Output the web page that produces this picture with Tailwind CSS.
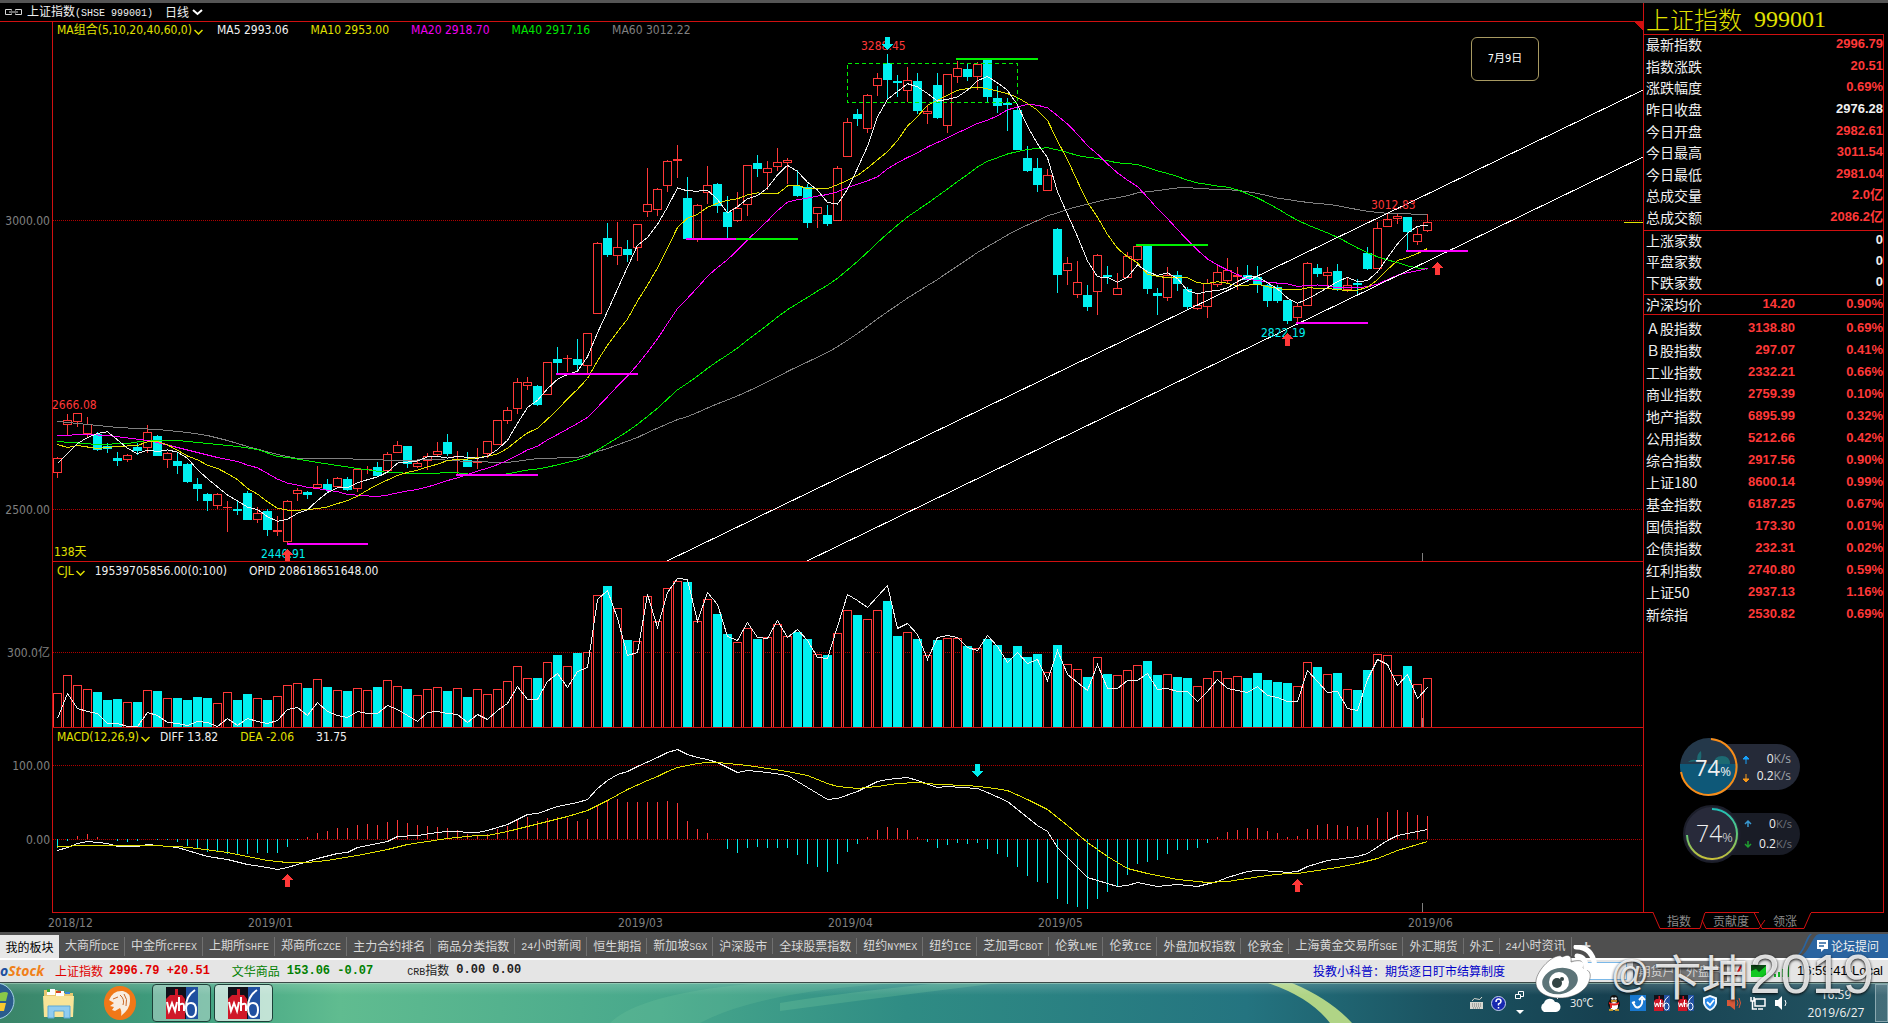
<!DOCTYPE html>
<html lang="zh-CN" class="h-full">
<head>
  <meta charset="UTF-8">
  <meta name="viewport" content="width=device-width, initial-scale=1.0">
  <title>上证指数 999001</title>
  <script src="https://cdn.jsdelivr.net/npm/@tailwindcss/browser@4"></script>
</head>
<body class="relative flex h-screen flex-col overflow-hidden bg-black font-['DejaVu_Sans_Condensed','Noto_Sans_CJK_SC',sans-serif] text-xs text-[#f0f0f0]">

<div class="h-[3px] shrink-0 bg-[#555]"></div>

<main class="flex min-h-0 flex-1">

  <!-- Chart column -->
  <div class="flex min-w-0 flex-1 flex-col">
    <div class="flex h-[18px] shrink-0 items-center pl-[5px] font-['Noto_Sans_CJK_SC',sans-serif]">
      <svg class="h-[6px] w-[17px]" viewBox="0 0 17 6" fill="none" stroke="#d8d8d8"><path d="M6.500 1.500V.5h-6v5h6V4.500M10.500 1.500V.5h6v5h-6V4.500M4 3h9"/></svg>
      <h1 class="ml-[5px] whitespace-pre">上证指数<span class="font-['Liberation_Mono',monospace] text-[10px]">(SHSE 999001)</span></h1>
      <button class="ml-3 flex items-center gap-[3px]">日线<svg class="h-[7px] w-[11px]" viewBox="0 0 11 7" fill="none" stroke="#fff" stroke-width="2"><path d="M1 1l4.500 4L10 1"/></svg></button>
    </div>

    <section class="relative min-h-0 flex-[540_1_0%]">
      <svg id="price" class="absolute inset-0 size-full" viewBox="0 21 1643 540" preserveAspectRatio="none" shape-rendering="crispEdges"></svg>
      <div class="relative flex items-center gap-[22px] pl-[57px] leading-[18px]">
        <div class="flex items-center gap-[14px]">
          <button class="flex items-center gap-0.5 text-[#e0e000]">MA组合(5,10,20,40,60,0)<svg class="mt-1 h-[6px] w-[9px]" viewBox="0 0 9 6" fill="none" stroke="#e0e000" stroke-width="1.500"><path d="M.5 1l4 4 4-4"/></svg></button>
          <span>MA5 2993.06</span>
        </div>
        <span class="text-[#e0e000]">MA10 2953.00</span>
        <span class="text-[#f000f0]">MA20 2918.70</span>
        <span class="text-[#00e800]">MA40 2917.16</span>
        <span class="text-[#808080]">MA60 3012.22</span>
      </div>
      <div class="absolute top-4 right-[104px] flex h-11 w-[68px] items-center justify-center rounded-md border border-[#a89a62] text-[11px] text-white">7月9日</div>
    </section>

    <section class="relative min-h-0 flex-[166_1_0%]">
      <svg id="volume" class="absolute inset-0 size-full" viewBox="0 561 1643 166" preserveAspectRatio="none" shape-rendering="crispEdges"></svg>
      <div class="relative flex items-center gap-[22px] pt-px pl-[57px] leading-[18px]">
        <div class="flex items-center gap-[10px]">
          <button class="flex items-center gap-0.5 text-[#e0e000]">CJL<svg class="mt-1 h-[6px] w-[9px]" viewBox="0 0 9 6" fill="none" stroke="#e0e000" stroke-width="1.500"><path d="M.5 1l4 4 4-4"/></svg></button>
          <span>19539705856.00(0:100)</span>
        </div>
        <span>OPID 208618651648.00</span>
      </div>
    </section>

    <section class="relative min-h-0 flex-[185_1_0%]">
      <svg id="macd" class="absolute inset-0 size-full" viewBox="0 727 1643 185" preserveAspectRatio="none" shape-rendering="crispEdges"></svg>
      <div class="relative flex items-center gap-[22px] pt-px pl-[57px] leading-[18px]">
        <div class="flex items-center gap-[10px]">
          <button class="flex items-center gap-0.5 text-[#e0e000]">MACD(12,26,9)<svg class="mt-1 h-[6px] w-[9px]" viewBox="0 0 9 6" fill="none" stroke="#e0e000" stroke-width="1.500"><path d="M.5 1l4 4 4-4"/></svg></button>
          <span>DIFF 13.82</span>
        </div>
        <span class="text-[#e0e000]">DEA -2.06</span>
        <span>31.75</span>
      </div>
    </section>

    <svg id="axis" class="h-5 w-full shrink-0" viewBox="0 912 1643 20" preserveAspectRatio="none" shape-rendering="crispEdges"></svg>
  </div>

  <!-- Quote panel -->
  <aside class="flex w-[245px] shrink-0 flex-col font-['Noto_Sans_CJK_SC',sans-serif]">
    <div class="mr-1 flex min-h-0 flex-1 flex-col border-l border-[#d01010]">
      <h2 class="flex h-[31px] shrink-0 items-center gap-3 pl-[2px] text-2xl leading-none font-light text-[#e0e000]">上证指数 <span class="font-['Liberation_Serif',serif]">999001</span></h2>
      <div class="min-h-0 flex-1 border-t border-r border-b border-[#d01010] text-sm">
        <table class="h-[196px] w-full border-b border-[#d01010]"><tbody id="summary"></tbody></table>
        <table class="h-16 w-full border-b border-[#d01010]"><tbody id="breadth"></tbody></table>
        <table class="h-5 w-full table-fixed border-b border-[#d01010]"><tbody id="average"></tbody></table>
        <table class="mt-1 h-[308px] w-full table-fixed"><tbody id="indices"></tbody></table>
      </div>
    </div>
    <nav class="relative h-[19px] shrink-0 text-xs text-[#8a8a8a]">
      <svg class="absolute -top-px left-0 h-[18px] w-[245px]" viewBox="0 0 245 18" fill="none" stroke="#d01010">
        <path d="M10 .5L17 16.500H57L62 .5M59 8l4 8.500H116M111 .5l8 16H161L168 .5M122 8l-6 8.500"/>
        <path d="M10.500 .5H62M116 .5H168" stroke="#000"/>
        <path d="M62 .5h54"/>
      </svg>
      <div class="relative flex pl-6 leading-4">
        <button class="w-6">指数</button>
        <button class="ml-[22px] w-9">贡献度</button>
        <button class="ml-6 w-6">领涨</button>
      </div>
    </nav>
  </aside>
</main>

<!-- Board tabs -->
<nav class="flex h-[26px] shrink-0 items-center bg-[#4f4f4f] font-['Noto_Sans_CJK_SC',sans-serif] leading-4 text-[#d8d8d8]">
  <button class="mt-[3px] h-[23px] w-[59px] shrink-0 bg-[#e8e8e8] text-black">我的板块</button>
  <div id="boards" class="flex min-w-0 items-center overflow-hidden pt-0.5"></div>
  <button class="ml-[10px] text-base font-bold" aria-label="添加">+</button>
  <a href="#" class="relative mt-0.5 ml-auto flex h-6 w-[93px] shrink-0 items-center justify-end gap-[3px] pr-[9px] text-[#f0f0f0]">
    <svg class="absolute inset-0 size-full" viewBox="0 0 93 24"><path d="M93 0H24C17 1 15 19 3 24H93z" fill="#2a64a0"/><path d="M15 0C10 4 9 18 0 23c10-2 12-19 17-23" fill="#2a64a0"/></svg>
    <svg class="relative h-3 w-[11px]" viewBox="0 0 11 12"><path d="M0 0h11v9H7l-3 3V9H0z" fill="#fff"/><path d="M2 3h7M2 6h5" stroke="#2a64a0" stroke-width="1.500"/></svg>
    <span class="relative">论坛提问</span>
  </a>
</nav>

<!-- Ticker -->
<div class="flex h-[25px] shrink-0 items-center border-t-2 border-b border-t-white border-b-[#3c4a48] bg-[#e5e5e5] font-['Noto_Sans_CJK_SC',sans-serif] leading-4 text-[#222]">
  <div class="w-[55px] shrink-0 overflow-hidden font-['Open_Sans',sans-serif] text-sm font-bold text-[#f08018] italic"><span class="text-[#2050a0]">o</span>Stock</div>
  <div class="flex gap-[6px] text-[#e00000]">上证指数<span class="font-['Liberation_Mono',monospace] font-bold whitespace-pre">2996.79 +20.51</span></div>
  <div class="ml-[22px] flex gap-[7px] text-[#008000]">文华商品<span class="font-['Liberation_Mono',monospace] font-bold whitespace-pre">153.06 -0.07</span></div>
  <div class="ml-[34px] flex gap-[7px]"><span><span class="font-['Liberation_Mono',monospace] text-[10px]">CRB</span>指数</span><span class="font-['Liberation_Mono',monospace] font-bold whitespace-pre">0.00 0.00</span></div>
  <a href="#" class="ml-auto text-[#0000c8]">投教小科普：期货逐日盯市结算制度</a>
  <input type="text" aria-label="搜索" class="ml-[67px] h-[18px] w-[55px] border border-[#7ab8e8] bg-white">
  <div class="ml-1.5 flex h-5 w-[94px] bg-[#747474] text-[#d8d8d8]">
    <button class="w-12 border-r border-[#aaa]">期货户</button>
    <button class="w-[46px]">外盘户</button>
  </div>
  <svg class="ml-1 h-4 w-[60px]" viewBox="0 0 60 16">
    <path d="M5 13L10 3" stroke="#e01010" stroke-width="2"/>
    <path d="M20 2h15v12H20z" fill="#0c4a14"/><path d="M20 14V8l5-2 3 3 7-6v11z" fill="#10c820"/>
    <path d="M43 14v-3h2v3zM47 14V9h2v5zM51 14V6h2v8zM56 14V2h2v12z" fill="#18b028"/>
  </svg>
  <span class="mr-[10px] ml-1.5 w-[81px] text-right font-['Liberation_Sans',sans-serif] text-[13px] whitespace-nowrap text-black">16:59:41-Local</span>
</div>

<!-- Taskbar -->
<footer class="relative flex h-10 shrink-0 items-center overflow-hidden bg-linear-to-r from-[#2f7f6b] via-[#2f8c86] to-[#1c4454] font-['Open_Sans','Noto_Sans_CJK_SC',sans-serif]">
  <svg class="absolute inset-0 size-full" viewBox="0 0 1888 40" preserveAspectRatio="none">
    <defs>
      <linearGradient id="wall" x1="0" x2="1"><stop offset="0" stop-color="#3a8468"/><stop offset=".1" stop-color="#3fa080"/><stop offset=".18" stop-color="#60bc90"/><stop offset=".35" stop-color="#48a88c"/><stop offset=".48" stop-color="#2f8c84"/><stop offset=".66" stop-color="#247480"/><stop offset=".76" stop-color="#1b5462"/><stop offset=".85" stop-color="#164050"/><stop offset="1" stop-color="#235462"/></linearGradient>
      <linearGradient id="gloss" x1="0" x2="0" y1="0" y2="1"><stop offset="0" stop-color="#fff" stop-opacity=".18"/><stop offset="1" stop-color="#fff" stop-opacity="0"/></linearGradient>
    </defs>
    <path d="M0 0H1888V40H0z" fill="url(#wall)"/>
    <path d="M610 40Q640 10 760 0H900Q760 8 700 40z" fill="#8fe0a8" opacity=".15"/>
    <path d="M780 28Q900 12 1000 0H940Q840 10 780 20z" fill="#8fe0a8" opacity=".2"/>
    <path d="M1268 0H1292Q1330 16 1352 40H1330Q1310 14 1268 0z" fill="#c0e088" opacity=".9"/>
    <path d="M0 0H1888V12H0z" fill="url(#gloss)"/>
    <path d="M0 .5H1888" stroke="#b8dcc8" opacity=".5"/>
  </svg>
  <div class="relative flex w-full items-center">
    <button class="w-[42px]" aria-label="开始"><svg class="h-10 w-5" viewBox="0 0 20 40"><circle cx="-4" cy="18" r="18" fill="#2a5c8c" stroke="#a8d4e8"/><path d="M0 10q6-2 8 0l-2 8H0z" fill="#8ac848"/><path d="M0 20h6l-2 8H0z" fill="#f8c830"/></svg></button>
    <button class="w-[61px]" aria-label="资源管理器"><svg class="h-[34px] w-[34px]" viewBox="0 0 34 34"><path d="M2 4h13l3 3h13v24H2z" fill="#e8c870"/><path d="M5 3h8v6H5zM14 5h8v5h-8z" fill="#fff"/><path d="M5 3h3v3H5z" fill="#40a840"/><path d="M14 5h5v2h-5z" fill="#d84020"/><path d="M23 6h5v2h-5z" fill="#3888d8"/><path d="M1 10h31l-1 21H2z" fill="#f8e498"/><path d="M6 20h22v12h-6v-7H12v7H6z" fill="#90ccf0" stroke="#5aa8d8"/></svg></button>
    <button class="w-[49px]" aria-label="浏览器"><svg class="h-9 w-[34px]" viewBox="0 0 34 36"><ellipse cx="17" cy="18" rx="16" ry="17" fill="#f07818"/><path d="M6 15Q10 5 20 6Q28 8 27 16Q27 24 18 31q1-5-1-8l-5 3-3-1 2-3-4-1 4-3z" fill="#f8ece0"/><path d="M10 14l5-2M21 9q4 5 2 12M17 10q5 4 3 10" fill="none" stroke="#c86828"/></svg></button>
    <button class="flex h-[38px] w-[59px] items-center justify-center rounded-sm border border-[#1c4038] bg-white/35" aria-label="wh6"><svg class="size-8" viewBox="0 0 32 32"><use href="#wh6"/></svg></button>
    <button class="ml-[3px] flex h-[38px] w-[59px] items-center justify-center rounded-sm border border-[#1c4038] bg-white/65" aria-label="wh6"><svg class="size-8" viewBox="0 0 32 32"><use href="#wh6"/></svg></button>

    <div class="ml-auto flex items-center">
      <svg class="h-[14px] w-[15px]" viewBox="0 0 15 14"><path d="M1 6h13v7H1z" fill="#d8d8d0"/><path d="M3 8h9M3 10h9M4 12h7" stroke="#777" stroke-dasharray="1 1"/><path d="M3 5q2-4 5-2t5-2" fill="none" stroke="#d8d8d0"/></svg>
      <svg class="ml-[7px] size-[15px]" viewBox="0 0 15 15"><circle cx="7.500" cy="7.500" r="7" fill="#1828b0" stroke="#c8d0f0"/><path d="M5 6q0-3 2.500-3T10 5.500Q10 7 7.500 8v1.500M7.500 11v1.500" fill="none" stroke="#fff" stroke-width="1.500"/></svg>
      <svg class="ml-[9px] h-[26px] w-[10px]" viewBox="0 0 10 26" fill="none" stroke="#fff"><path d="M3.500 4V1.500h5v5H6M.5 4.500h5v4h-5z"/><path d="M1 20h8l-4 4z" fill="#fff" stroke="none"/></svg>
      <svg class="ml-[14px] h-5 w-[24px]" viewBox="0 0 24 20"><path d="M5 19a5 5 0 010-9 6 6 0 0111-1 5 5 0 011 10z" fill="#fff"/><path d="M17 4l2 2M20 2v3" stroke="#fff"/></svg>
      <span class="mr-[10px] ml-[7px] w-[26px] text-[11px] whitespace-nowrap">30℃</span>
      <div class="flex items-center gap-2">
        <svg class="size-4" viewBox="0 0 16 16"><ellipse cx="8" cy="9" rx="6" ry="6" fill="#111"/><circle cx="8" cy="4" r="4" fill="#111"/><ellipse cx="8" cy="11" rx="4" ry="4" fill="#fff"/><path d="M3 7q5 3 10 0v2q-5 3-10 0z" fill="#e02020"/><path d="M4 9h2v4H4z" fill="#e02020"/><circle cx="6.500" cy="3.500" r="1.300" fill="#fff"/><circle cx="9.500" cy="3.500" r="1.300" fill="#fff"/><path d="M5 6h6M3 15h4M9 15h4" stroke="#f8b020" stroke-width="1.500"/></svg>
        <svg class="size-4" viewBox="0 0 16 16"><path d="M0 0h16v16H0z" fill="#1878d0"/><path d="M3 7q2 7 6 5t3-8M9 5l3-3 3 3M2 8l3-1" fill="none" stroke="#fff" stroke-width="2"/></svg>
        <svg class="size-4" viewBox="0 0 32 32"><use href="#wh6"/></svg>
        <svg class="size-4" viewBox="0 0 32 32"><use href="#wh6"/></svg>
        <svg class="size-4" viewBox="0 0 16 16"><path d="M8 0l7 2.500V8q-1 5-7 8-6-3-7-8V2.500z" fill="#f0f8ff"/><path d="M8 2l5 2v4q-1 4-5 6-4-2-5-6V4z" fill="#2888e8"/><path d="M5 7l3 3 4-5" fill="none" stroke="#fff" stroke-width="1.800"/></svg>
        <svg class="size-4" viewBox="0 0 16 16"><path d="M1 5h3l5-4v14l-5-4H1z" fill="#d85838"/><path d="M11 5q2 3 0 6M13 3q3 5 0 10" fill="none" stroke="#d85838"/></svg>
        <svg class="size-4" viewBox="0 0 16 16" fill="none" stroke="#fff" stroke-width="1.500"><path d="M5 4h10v7H5zM8 14h5M1 2v4h3V2M2.500 6v8H7"/></svg>
        <svg class="size-4" viewBox="0 0 16 16"><path d="M1 5h3l4-4v14l-4-4H1z" fill="#fff"/><path d="M11 5q2 3 0 6" fill="none" stroke="#fff"/></svg>
      </div>
      <div class="mr-1 ml-[11px] w-[70px] pt-px text-center leading-[18px]">16:59<br>2019/6/27</div>
      <button class="h-[38px] w-[13px] border border-[#8aa8b0] bg-white/15" aria-label="显示桌面"></button>
    </div>
  </div>
</footer>

<!-- Network speed widgets -->
<div class="absolute right-[88px] bottom-[160px] flex w-[120px] flex-col gap-2">
  <div class="relative flex h-[60px] items-center justify-end">
    <div class="flex h-[46px] w-[86px] flex-col justify-center rounded-r-full bg-[#252a38] pr-[9px] text-right font-['Open_Sans',sans-serif] text-xs leading-[17px]">
      <div>0<span class="text-[#a0a4ac]">K/s</span></div>
      <div>0.2<span class="text-[#a0a4ac]">K/s</span></div>
    </div>
    <svg class="absolute top-0 left-0 h-[60px] w-[76px]" viewBox="0 0 76 60">
      <circle cx="29" cy="30" r="29" fill="#24384a"/>
      <path d="M0 27h58a29 29 0 01-58 3z" fill="#0e5878"/>
      <path d="M8 25q5-4 9-1 0-8 4-10 1 7-1 10M34 27q0-8 8-8t8 8" fill="#1c6a72"/>
      <path d="M31 2a28 28 0 11-30 33" fill="none" stroke="#f88c18" stroke-width="2"/>
      <path d="M66 27v-7M63 22l3-3 3 3z" fill="#18a0f8" stroke="#18a0f8"/>
      <path d="M66 37v7M63 42l3 3 3-3z" fill="#f89818" stroke="#f89818"/>
    </svg>
    <div class="absolute top-4 left-[15px] font-['Open_Sans',sans-serif] text-[22px] leading-7">74<span class="text-[13px]">%</span></div>
  </div>
  <div class="relative flex h-[58px] items-center justify-end">
    <div class="flex h-[42px] w-[86px] flex-col justify-center rounded-r-full bg-[#191c26] pr-2 text-right font-['Open_Sans',sans-serif] text-xs leading-5">
      <div>0<span class="text-[11px] text-[#70747c]">K/s</span></div>
      <div>0.2<span class="text-[11px] text-[#70747c]">K/s</span></div>
    </div>
    <svg class="absolute top-0 left-[3px] h-[58px] w-[76px]" viewBox="0 0 76 58">
      <defs><linearGradient id="ring" x1="0" x2="0" y1="0" y2="1"><stop offset="0" stop-color="#20c0b8"/><stop offset=".5" stop-color="#60c878"/><stop offset="1" stop-color="#c8c038"/></linearGradient></defs>
      <circle cx="29" cy="29" r="28" fill="#282a3a" stroke="#1c1e2a" stroke-width="2"/>
      <path d="M29 4a25 25 0 11-25 26" fill="none" stroke="url(#ring)" stroke-width="2"/>
      <path d="M65 22v-5M62 19l3-3 3 3" fill="none" stroke="#3898d0" stroke-width="1.500"/>
      <path d="M65 36v5M62 39l3 3 3-3" fill="none" stroke="#20a030" stroke-width="1.500"/>
    </svg>
    <div class="absolute top-[14px] left-4 font-['Open_Sans',sans-serif] text-[23px] leading-7 font-light">74<span class="text-[13px]">%</span></div>
  </div>
</div>

<!-- Watermark -->
<div class="pointer-events-none absolute right-[14px] bottom-[20px] flex h-[58px] items-center text-white/85 [text-shadow:0_1px_3px_#000]">
  <svg class="mr-[6px] h-[54px] w-[70px] self-start" viewBox="0 0 70 54">
    <path d="M27 12c6-3 10-2 9 5 9-3 15-1 12 6 6 2 8 5 7 10-2 12-15 20-30 20C10 53 0 46 1 36 2 25 18 9 26 11z" fill="#fff" stroke="#444" stroke-opacity=".5"/>
    <ellipse cx="25" cy="36" rx="18" ry="13" fill="#5c7478" transform="rotate(-12 25 36)"/>
    <circle cx="24" cy="37" r="10" fill="#fff"/><circle cx="22" cy="38" r="5" fill="#344"/><circle cx="27" cy="34" r="2" fill="#344"/>
    <path d="M41 2q18 0 19 22M42 11q9 1 9 12" fill="none" stroke="#fff" stroke-width="5" stroke-linecap="round"/>
  </svg>
  <span class="mr-1 font-['Liberation_Sans',sans-serif] text-[38px]">@</span>
  <span class="font-['Noto_Sans_CJK_SC',sans-serif] text-5xl">卞坤</span>
  <span class="font-['Liberation_Sans',sans-serif] text-[56px]">2019</span>
</div>

<svg class="hidden">
  <symbol id="wh6" viewBox="0 0 32 32">
    <path d="M0 0h32v32H0z" fill="#101018"/><path d="M20 0h12v32H20z" fill="#2050a0"/><path d="M0 12l4-4h5V2h3v6h4l3 4v20H0z" fill="#d01828"/>
    <path d="M1 15l2 9 3-8 3 8 2-9M13 10v14M13 18q5-3 5 1v5" fill="none" stroke="#fff" stroke-width="2"/>
    <path d="M29 3q-9 6-9 17 0 10 5 10t5-7-5-7-5 6" fill="none" stroke="#fff" stroke-width="2"/>
  </symbol>
</svg>

<script>
  const RED = '#ff3838', CYAN = '#00f0f0', LINE = '#d01010', GRAY = '#808080';
  const YELLOW = '#e0e000', MAGENTA = '#ff00ff', GREEN = '#00f000';
  const FIRST = 57, STEP = 10;

  // [rising, body top, body bottom, high, low]
  const bars = [
    [1,458,473,457,478],[1,420,425,414,435],[1,413,422,413,427],[1,424,434,417,437],[0,434,450,432,451],[0,446,449,443,453],
    [0,458,461,452,466],[1,455,460,454,462],[0,447,451,443,455],[1,432,448,425,453],[0,436,456,435,456],[1,453,460,452,468],
    [0,461,466,452,474],[0,464,482,463,483],[0,484,489,478,501],[0,494,501,493,511],[1,494,506,493,509],[1,507,507,501,532],
    [0,509,511,501,515],[0,493,520,491,520],[1,513,520,507,523],[0,511,530,509,536],[1,530,532,516,536],[1,501,542,500,543],
    [1,490,494,488,501],[0,492,495,491,499],[1,484,488,466,488],[0,484,490,479,492],[1,478,487,477,487],[0,479,490,477,491],
    [1,469,489,468,492],[1,469,470,466,474],[0,467,476,462,476],[1,454,471,452,472],[1,445,453,441,453],[0,446,464,446,468],
    [1,463,467,459,468],[1,456,461,453,470],[1,451,455,442,456],[0,442,454,434,456],[1,456,457,451,474],[0,460,467,452,467],
    [1,461,463,448,469],[1,441,454,441,458],[1,420,445,420,445],[1,410,421,407,424],[1,382,409,378,414],[1,382,386,377,390],
    [0,386,405,385,406],[1,362,395,362,395],[0,359,363,347,374],[1,358,359,355,372],[0,359,365,339,372],[1,333,366,333,373],
    [1,243,314,242,314],[0,238,255,223,257],[1,247,256,222,265],[0,249,255,240,262],[1,224,248,224,261],[1,204,212,168,217],
    [1,189,210,188,216],[1,161,186,160,192],[1,159,161,145,178],[0,198,239,177,239],[1,205,239,204,242],[1,185,193,166,204],
    [0,184,206,183,213],[0,212,227,196,239],[1,208,221,192,222],[1,165,205,165,216],[0,163,169,155,177],[1,168,173,161,190],
    [1,162,167,148,171],[1,160,163,158,184],[0,186,196,170,197],[0,187,223,184,228],[1,207,214,207,228],[0,215,224,205,226],
    [1,168,221,166,221],[1,122,157,118,157],[0,114,119,109,126],[1,95,129,94,133],[1,78,86,73,96],[0,63,80,54,99],
    [0,81,83,75,97],[1,80,91,67,102],[0,81,111,73,114],[1,111,114,105,124],[0,85,118,73,119],[1,74,126,74,133],
    [1,68,77,61,83],[0,69,77,63,81],[1,64,77,62,90],[0,60,97,59,102],[0,98,106,86,113],[0,103,105,98,131],
    [0,110,150,108,150],[0,158,171,146,172],[0,168,185,158,192],[1,175,191,169,191],[0,229,275,228,293],[1,263,271,257,285],
    [1,282,295,261,298],[0,295,307,285,311],[1,255,292,254,315],[0,275,277,266,284],[1,288,295,273,295],[1,256,278,252,278],
    [1,246,260,245,261],[0,246,289,245,294],[0,293,296,288,315],[1,275,298,267,301],[0,275,284,271,291],[0,289,307,287,309],
    [1,305,309,294,310],[1,283,307,279,318],[1,272,285,264,287],[1,270,281,258,284],[1,275,277,267,290],[0,275,280,265,282],
    [0,277,285,266,293],[0,285,301,284,307],[0,287,301,285,303],[0,300,321,300,324],[1,306,318,303,322],[1,263,306,262,306],
    [0,268,274,264,277],[1,272,276,267,287],[0,271,290,264,291],[1,285,290,277,292],[0,283,285,279,294],[0,253,269,247,270],
    [1,228,269,222,269],[1,219,227,214,227],[1,216,219,214,224],[0,217,232,217,250],[1,234,242,228,245],[1,222,231,214,232]
  ];

  const volumes = [
    34,52,42,38,35,27,28,25,25,37,36,29,29,27,30,29,24,35,27,33,29,27,31,42,44,39,48,40,37,36,
    39,37,40,47,41,38,32,38,40,36,39,30,38,33,38,46,61,49,49,65,72,61,74,75,132,141,119,87,86,131,
    106,139,146,145,106,128,113,93,85,99,88,90,103,91,95,88,73,72,94,117,112,108,117,126,91,95,88,72,87,89,
    89,81,79,88,82,69,81,70,73,55,82,63,58,50,70,53,52,57,62,66,52,53,50,49,41,49,56,49,51,49,
    54,47,45,44,41,65,60,53,54,38,37,57,73,72,52,61,43,49
  ];
  const openInterest = [
    9,34,19,16,14,4,4,1,1,15,12,5,4,2,6,5,1,9,2,9,6,4,7,18,20,12,25,16,12,10,
    16,14,14,22,18,12,6,15,16,14,13,5,13,8,17,24,41,28,28,46,54,40,56,60,128,137,109,72,75,133,
    100,135,149,148,106,135,123,91,87,105,90,89,107,90,98,87,70,69,101,133,127,120,131,142,99,104,93,68,90,92,
    90,80,77,92,81,65,75,64,68,47,77,53,45,37,63,39,39,47,47,54,38,39,36,36,26,36,48,39,37,35,
    41,32,30,26,26,57,46,35,36,19,17,48,68,63,42,53,29,40
  ];
  const histogram = [
    -9,-2,3,5,2,0,-2,-3,-2,0,-1,-1,-3,-7,-10,-13,-13,-15,-15,-15,-14,-14,-14,-8,-1,2,6,8,11,11,
    14,15,14,17,19,16,14,13,12,11,9,5,4,5,10,13,19,22,18,21,22,21,18,20,34,39,40,37,37,37,
    37,38,36,18,10,6,0,-10,-14,-9,-8,-9,-9,-9,-16,-25,-28,-33,-25,-13,-5,2,9,12,11,9,2,-3,-9,-6,
    -4,-5,-4,-10,-15,-18,-28,-37,-43,-44,-60,-65,-68,-70,-60,-53,-48,-36,-25,-23,-21,-15,-11,-11,-9,-4,2,7,9,11,
    11,8,6,2,3,10,14,15,14,13,12,14,21,27,29,27,24,23
  ];
  const diff = [[0,850],[1,847],[2,843],[3,841],[5,843],[6,846],[8,846],[9,844],[11,846],[12,847],[13,850],[15,856],[17,859],[19,864],[21,867],[22,869],[23,867],[24,864],[26,858],[28,853],[29,852],[30,847],[32,843],[33,841],[34,836],[36,835],[38,832],[39,831],[42,832],[43,830],[44,827],[45,824],[46,819],[47,814],[48,813],[50,806],[51,804],[52,802],[53,799],[54,788],[55,780],[56,774],[57,771],[58,766],[60,757],[61,752],[62,749],[63,754],[64,757],[65,759],[66,762],[67,767],[68,772],[69,770],[71,772],[73,775],[74,781],[75,787],[76,793],[77,799],[78,798],[80,791],[82,781],[83,779],[85,777],[86,780],[88,787],[89,786],[92,788],[93,792],[95,801],[97,817],[98,825],[99,831],[100,847],[102,867],[103,877],[105,883],[106,886],[107,885],[108,882],[110,886],[112,884],[114,886],[116,881],[117,877],[119,871],[120,870],[122,871],[123,872],[124,871],[125,866],[126,863],[127,860],[130,856],[131,853],[133,840],[134,835],[136,831],[137,829]];
  const dea = [[0,846],[3,845],[9,845],[12,846],[14,848],[17,852],[19,856],[21,860],[23,862],[25,862],[27,860],[30,855],[33,849],[35,844],[37,841],[39,838],[42,835],[43,835],[45,831],[47,826],[49,821],[51,816],[53,810],[55,800],[57,789],[59,780],[60,776],[61,771],[62,767],[64,763],[65,762],[66,762],[67,763],[69,765],[71,768],[73,771],[75,775],[77,783],[78,786],[80,788],[82,786],[84,783],[86,782],[88,784],[91,785],[93,787],[95,790],[97,799],[99,809],[101,825],[103,842],[105,856],[107,868],[109,873],[112,879],[115,882],[117,881],[119,878],[121,875],[123,873],[124,873],[126,870],[128,867],[130,863],[132,858],[134,850],[137,841]];

  const mid = i => FIRST + i * STEP + 0.5;
  const rule = (x1, y1, x2, y2, color, extra = '') => `<line x1="${x1}" y1="${y1}" x2="${x2}" y2="${y2}" stroke="${color}" ${extra}/>`;
  const curve = (pts, color) => `<polyline points="${pts.map(([i, y]) => mid(i) + ',' + (y + 0.5)).join(' ')}" fill="none" stroke="${color}"/>`;
  const label = (x, y, text, color, anchor = 'start') => `<text x="${x}" y="${y}" fill="${color}" text-anchor="${anchor}" font-size="12">${text}</text>`;
  const grid = y => rule(53, y, 1643, y, '#b00000', 'stroke-dasharray="1 1"');
  const frame = (top, bottom) => rule(52.5, top, 52.5, bottom, LINE) + rule(52, top + 0.5, 1643, top + 0.5, LINE);
  const upArrow = (x, y) => `<path d="M${x} ${y}l6 6h-3v7h-5v-7h-4z" fill="${RED}"/>`;
  const downArrow = (x, y) => `<path d="M${x - 2} ${y}h5v7h3l-6 6-5-6h3z" fill="${CYAN}"/>`;

  // Averages of closes; history before the first bar comes from `lead`
  function average(n, lead) {
    const pts = lead.slice();
    for (let i = n - 1; i < bars.length; i++) {
      let sum = 0;
      for (let k = i - n + 1; k <= i; k++) sum += bars[k][0] ? bars[k][1] : bars[k][2];
      pts.push([i, sum / n]);
    }
    return pts;
  }

  function candle([up, top, bottom, high, low], i) {
    const x = FIRST + i * STEP, h = Math.max(bottom - top, 1);
    if (!up) return rule(x + 0.5, high, x + 0.5, low, CYAN) + `<rect x="${x - 4}" y="${top}" width="9" height="${h}" fill="${CYAN}"/>`;
    const wicks = rule(x + 0.5, high, x + 0.5, top, RED) + rule(x + 0.5, bottom, x + 0.5, low, RED);
    if (h < 3) return wicks + `<rect x="${x - 4}" y="${top}" width="9" height="${h}" fill="${RED}"/>`;
    return wicks + `<rect x="${x - 3.5}" y="${top + 0.5}" width="8" height="${h - 1}" fill="none" stroke="${RED}"/>`;
  }

  document.getElementById('price').innerHTML =
    grid(220.5) + grid(509.5) + rule(0, 21.5, 1643, 21.5, LINE) + frame(21, 561) +
    `<path d="M1634 21h9v10z" fill="${LINE}"/>` + rule(1624, 222.5, 1643, 222.5, YELLOW) +
    bars.map(candle).join('') +
    curve(average(60, [[0,421],[3,424],[6,427],[10,429],[13,432],[15,435],[17,440],[19,446],[22,454],[24,458],[28,458],[31,459],[34,460],[38,459],[41,461],[45,462],[48,458],[52,457],[55,448],[58,437]]), GRAY) +
    curve(average(40, [[0,441],[4,444],[7,443],[9,440],[12,440],[14,442],[18,446],[20,449],[22,456],[23,457],[26,462],[30,468],[33,472],[36,473]]), GREEN) +
    curve(average(20, [[0,435],[3,434],[5,435],[9,440],[10,442],[12,447],[14,452],[16,457],[18,461]]), MAGENTA) +
    curve(average(10, [[0,444],[1,447],[2,445],[4,448],[6,446],[8,445]]), YELLOW) +
    curve(average(5, [[0,463],[1,453],[2,443],[3,437]]), '#f0f0f0') +
    rule(667, 561, 1643, 90, '#fff') + rule(807, 561, 1643, 157, '#fff') +
    [[287,368,544,MAGENTA],[456,538,475,MAGENTA],[556,638,374,MAGENTA],[686,736,239,MAGENTA],[736,798,239,GREEN],[956,1038,59,GREEN],[1136,1208,245,GREEN],[1296,1368,323,MAGENTA],[1406,1468,251,MAGENTA]]
      .map(([a, b, y, c]) => rule(a, y, b, y, c, 'stroke-width="2"')).join('') +
    `<rect x="847.5" y="63.500" width="170" height="39" fill="none" stroke="${GREEN}" stroke-dasharray="4 3"/>` +
    label(52, 409, '2666.08', RED) + label(861, 50, '3288.45', RED) + label(1371, 209, '3012.83', RED) +
    label(261, 558, '2440.91', CYAN) + label(1261, 337, '2822.19', CYAN) + label(54, 556, '138天', YELLOW) +
    upArrow(287, 549) + upArrow(1287, 333) + upArrow(1437, 262) + downArrow(887, 37) +
    label(50, 225, '3000.00', GRAY, 'end') + label(50, 514, '2500.00', GRAY, 'end') +
    rule(1422.5, 553, 1422.5, 561, GRAY);

  document.getElementById('volume').innerHTML =
    grid(652.5) + frame(561, 727) +
    volumes.map((v, i) => {
      const x = FIRST + i * STEP - 4;
      return bars[i][0]
        ? `<rect x="${x + 0.5}" y="${727.5 - v}" width="8" height="${v + 2}" fill="none" stroke="${RED}"/>`
        : `<rect x="${x}" y="${727 - v}" width="9" height="${v}" fill="${CYAN}"/>`;
    }).join('') +
    curve(openInterest.map((v, i) => [i, 727 - v]), '#f0f0f0') +
    label(50, 657, '300.0亿', GRAY, 'end') + rule(1422.5, 718, 1422.5, 727, GRAY);

  document.getElementById('macd').innerHTML =
    grid(765.5) + grid(839.5) + frame(727, 912) +
    histogram.map((v, i) => v ? rule(mid(i), 839, mid(i), 839 - v, v > 0 ? RED : CYAN) : '').join('') +
    curve(diff, '#f0f0f0') + curve(dea, YELLOW) +
    upArrow(287, 874) + upArrow(1297, 879) + downArrow(977, 764) +
    label(50, 770, '100.00', GRAY, 'end') + label(50, 844, '0.00', GRAY, 'end') + rule(1422.5, 903, 1422.5, 912, GRAY);

  document.getElementById('axis').innerHTML = rule(52, 912.5, 1643, 912.5, LINE) +
    [[48,'2018/12'],[248,'2019/01'],[618,'2019/03'],[828,'2019/04'],[1038,'2019/05'],[1408,'2019/06']]
      .map(([x, t]) => label(x, 927, t, GRAY)).join('');

  const quote = "text-right align-top font-['Liberation_Sans','Noto_Sans_CJK_SC',sans-serif] text-[13px] leading-[18px] font-bold";
  const name = 'pl-[2px] text-left align-top leading-[18px] font-normal whitespace-nowrap';
  const pair = ([n, v, plain]) => `<tr><th class="${name}">${n}</th><td class="${quote} ${plain ? 'text-[#f0f0f0]' : 'text-[#ff3838]'}">${v}</td></tr>`;
  const triple = ([n, v, p]) => `<tr><th class="w-[70px] ${name}">${n}</th><td class="w-[81px] ${quote} text-[#ff3838]">${v}</td><td class="${quote} text-[#ff3838]">${p}%</td></tr>`;
  const fill = (id, rows, tpl) => document.getElementById(id).innerHTML = rows.map(tpl).join('');

  fill('summary', [['最新指数','2996.79'],['指数涨跌','20.51'],['涨跌幅度','0.69%'],['昨日收盘','2976.28',1],['今日开盘','2982.61'],['今日最高','3011.54'],['今日最低','2981.04'],['总成交量','2.0亿'],['总成交额','2086.2亿']], pair);
  fill('breadth', [['上涨家数','0',1],['平盘家数','0',1],['下跌家数','0',1]], pair);
  fill('average', [['沪深均价','14.20','0.90']], triple);
  fill('indices', [['Ａ股指数','3138.80','0.69'],['Ｂ股指数','297.07','0.41'],['工业指数','2332.21','0.66'],['商业指数','2759.39','0.10'],['地产指数','6895.99','0.32'],['公用指数','5212.66','0.42'],['综合指数','2917.56','0.90'],['上证180','8600.14','0.99'],['基金指数','6187.25','0.67'],['国债指数','173.30','0.01'],['企债指数','232.31','0.02'],['红利指数','2740.80','0.59'],['上证50','2937.13','1.16'],['新综指','2530.82','0.69']], triple);

  const boards = ['大商所DCE','中金所CFFEX','上期所SHFE','郑商所CZCE','主力合约排名','商品分类指数','24小时新闻','恒生期指','新加坡SGX','沪深股市','全球股票指数','纽约NYMEX','纽约ICE','芝加哥CBOT','伦敦LME','伦敦ICE','外盘加权指数','伦敦金','上海黄金交易所SGE','外汇期货','外汇','24小时资讯'];
  document.getElementById('boards').innerHTML = boards.map(b =>
    `<button class="shrink-0 border-r border-[#707070] pr-[5px] pl-1.5 whitespace-nowrap">${b.replace(/[A-Z0-9]+/, m => `<span class="font-['Liberation_Mono',monospace] text-[10px]">${m}</span>`)}</button>`).join('');
</script>
</body>
</html>
